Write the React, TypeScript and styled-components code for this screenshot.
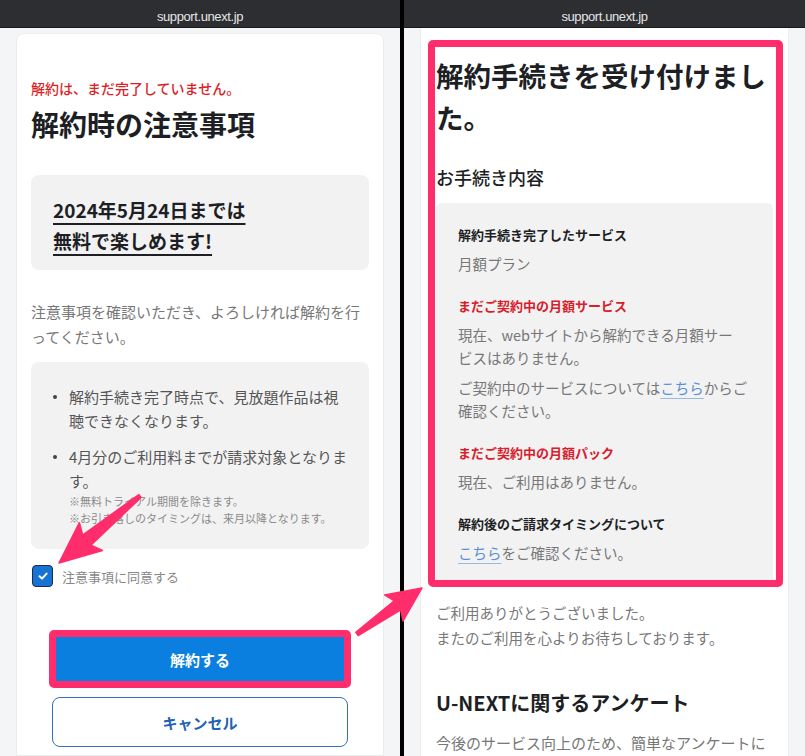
import React from "react";
import styled, { createGlobalStyle } from "styled-components";

const GlobalStyle = createGlobalStyle`
  html, body {
    margin: 0;
    padding: 0;
    background: #f4f5f7;
  }
  body {
    font-family: "Noto Sans CJK JP", "Noto Sans", sans-serif;
  }
  * {
    box-sizing: border-box;
  }
`;

const PINK = "#ff2d6b";

const Page = styled.div`
  position: relative;
  width: 805px;
  height: 756px;
  overflow: hidden;
  display: grid;
  grid-template-columns: 400px 4px 401px;
  background: #f4f5f7;
`;

const Divider = styled.div`
  background: #000;
`;

const Phone = styled.section`
  display: flex;
  flex-direction: column;
  min-width: 0;
  overflow: hidden;
  background: #f4f5f7;
`;

const UrlBar = styled.header`
  flex: none;
  height: 28px;
  padding-top: 5px;
  display: flex;
  align-items: center;
  justify-content: center;
  background: #2c2e32;
  border-bottom: 1px solid #18191b;
  color: #e6e6e6;
  font: 13px "Liberation Sans", Arial, sans-serif;
  letter-spacing: -0.4px;
`;

const Screen = styled.div<{ $top: number }>`
  flex: 1;
  display: flex;
  flex-direction: column;
  padding: ${(p) => p.$top}px 16px 0 16px;
`;

const Card = styled.div<{ $open?: boolean }>`
  flex: 1;
  background: #fff;
  border: 1px solid #eaecef;
  border-top: ${(p) => (p.$open ? "none" : "1px solid #eaecef")};
  border-radius: ${(p) => (p.$open ? "0" : "8px 8px 0 0")};
  padding: ${(p) => (p.$open ? "26px 15px 0" : "44px 14px 0")};
`;

/* ---------- left screen ---------- */

const Alert = styled.p`
  margin: 0;
  color: #dc1f26;
  font-size: 14px;
  line-height: 20px;
  font-weight: 500;
`;

const Title = styled.h1<{ $size?: number }>`
  margin: 6px 0 0;
  color: #1d1f24;
  font-size: ${(p) => p.$size ?? 28}px;
  line-height: ${(p) => (p.$size ? 42 : 40)}px;
  font-weight: 700;
`;

const PromoBox = styled.div`
  margin-top: 31px;
  padding: 19px 22px 14px;
  background: #f2f2f3;
  border-radius: 8px;
`;

const PromoText = styled.p`
  margin: 0;
  color: #1d1f24;
  font-size: 19px;
  line-height: 31px;
  font-weight: 700;

  span {
    text-decoration: underline;
    text-decoration-thickness: 1.5px;
    text-underline-offset: 5px;
  }
`;

const Lead = styled.p<{ $gap: number }>`
  margin: ${(p) => p.$gap}px 0 0;
  color: #777;
  font-size: 15px;
  line-height: 25px;
`;

const NoticeBox = styled.ul`
  margin: 13px 0 0;
  padding: 23px 18px 22px 22px;
  list-style: none;
  background: #f2f2f3;
  border-radius: 8px;
`;

const NoticeItem = styled.li`
  position: relative;
  padding-left: 16px;
  color: #555;
  font-size: 15px;
  line-height: 24px;

  & + & {
    margin-top: 12px;
  }

  &::before {
    content: "";
    position: absolute;
    left: 0;
    top: 10px;
    width: 4px;
    height: 4px;
    border-radius: 50%;
    background: #444;
  }
`;

const SubNote = styled.small`
  display: block;
  color: #8a8a8a;
  font-size: 11px;
  line-height: 17px;
`;

const Agree = styled.label`
  display: flex;
  align-items: center;
  gap: 9px;
  margin: 16px 0 0 1px;
  color: #888;
  font-size: 13px;
`;

const CheckBox = styled.span`
  display: flex;
  align-items: center;
  justify-content: center;
  width: 21px;
  height: 22px;
  border-radius: 4px;
  background: #1673d3;
  border: 1.5px solid #1b2c44;
`;

const Actions = styled.div`
  display: flex;
  flex-direction: column;
  gap: 12px;
  margin: 46px 21px 0;
`;

const Button = styled.button<{ $primary?: boolean; $marked?: boolean }>`
  position: relative;
  height: ${(p) => (p.$primary ? 52 : 50)}px;
  border-radius: ${(p) => (p.$primary ? 3 : 8)}px;
  border: ${(p) => (p.$primary ? "none" : "1.5px solid #3570bd")};
  background: ${(p) => (p.$primary ? "#0b7fdf" : "#fff")};
  color: ${(p) => (p.$primary ? "#fff" : "#2261b3")};
  font-family: inherit;
  font-size: 15px;
  font-weight: 700;

  &::after {
    content: "";
    display: ${(p) => (p.$marked ? "block" : "none")};
    position: absolute;
    inset: -3px;
    border: 7px solid ${PINK};
    border-radius: 5px;
  }
`;

/* ---------- right screen ---------- */

const Highlight = styled.div`
  position: relative;

  &::after {
    content: "";
    position: absolute;
    top: -14px;
    left: -8px;
    right: -10px;
    bottom: -4px;
    border: 7px solid ${PINK};
    border-radius: 5px;
    pointer-events: none;
  }
`;

const SectionTitle = styled.h2`
  margin: 26px 0 0;
  color: #1d1f24;
  font-size: 18px;
  line-height: 26px;
  font-weight: 500;
`;

const DetailBox = styled.div`
  margin-top: 13px;
  padding: 22px 22px 19px;
  background: #f2f2f3;
  border-radius: 6px 6px 0 0;
`;

const Entry = styled.div`
  & + & {
    margin-top: 21px;
  }
`;

const Label = styled.h3<{ $alert?: boolean }>`
  margin: 0;
  color: ${(p) => (p.$alert ? "#d7202b" : "#1d1f24")};
  font-size: 13px;
  line-height: 20px;
  font-weight: 700;
`;

const Value = styled.p`
  margin: 7px 0 0;
  color: #777;
  font-size: 14.5px;
  line-height: 23px;
`;

const TextLink = styled.a`
  color: #5b8fd4;
  text-decoration: underline;
  text-decoration-color: #9ab8e2;
  text-underline-offset: 4px;
`;

const Body = styled.p<{ $gap: number; $size?: number }>`
  margin: ${(p) => p.$gap}px 0 0;
  color: #777;
  font-size: ${(p) => p.$size ?? 14.5}px;
  line-height: 25px;
`;

const SurveyTitle = styled.h2`
  margin: 38px 0 0;
  color: #1d1f24;
  font-size: 20px;
  line-height: 30px;
  font-weight: 700;
`;

/* ---------- annotation arrows ---------- */

const Annotations = styled.svg`
  position: absolute;
  left: 0;
  top: 0;
  pointer-events: none;
`;

type Pt = [number, number];

const arrowPoints = (tail: Pt, tip: Pt, head: number, half: number, tailHalf: number, neckHalf: number) => {
  const dx = tip[0] - tail[0];
  const dy = tip[1] - tail[1];
  const len = Math.hypot(dx, dy);
  const ux = dx / len;
  const uy = dy / len;
  const px = -uy;
  const py = ux;
  const bx = tip[0] - ux * head;
  const by = tip[1] - uy * head;
  const wx = bx - ux * head * 0.15;
  const wy = by - uy * head * 0.15;
  const pts: Pt[] = [
    [tail[0] + px * tailHalf, tail[1] + py * tailHalf],
    [bx + px * neckHalf, by + py * neckHalf],
    [wx + px * half, wy + py * half],
    tip,
    [wx - px * half, wy - py * half],
    [bx - px * neckHalf, by - py * neckHalf],
    [tail[0] - px * tailHalf, tail[1] - py * tailHalf],
  ];
  return pts.map((p) => `${p[0].toFixed(1)},${p[1].toFixed(1)}`).join(" ");
};

const Check = () => (
  <svg width="12" height="12" viewBox="0 0 12 12">
    <path d="M2.5 6.3 L5 8.6 L9.6 3.6" fill="none" stroke="#fff" strokeWidth="2" strokeLinecap="round" strokeLinejoin="round" />
  </svg>
);

export default function App() {
  return (
    <>
      <GlobalStyle />
      <Page>
        <Phone>
          <UrlBar>support.unext.jp</UrlBar>
          <Screen $top={5}>
            <Card>
              <Alert>解約は、まだ完了していません。</Alert>
              <Title>解約時の注意事項</Title>
              <PromoBox>
                <PromoText>
                  <span>2024年5月24日までは</span>
                  <br />
                  <span>無料で楽しめます!</span>
                </PromoText>
              </PromoBox>
              <Lead $gap={29}>注意事項を確認いただき、よろしければ解約を行ってください。</Lead>
              <NoticeBox>
                <NoticeItem>解約手続き完了時点で、見放題作品は視聴できなくなります。</NoticeItem>
                <NoticeItem>
                  4月分のご利用料までが請求対象となります。
                  <SubNote>※無料トライアル期間を除きます。</SubNote>
                  <SubNote>※お引き落しのタイミングは、来月以降となります。</SubNote>
                </NoticeItem>
              </NoticeBox>
              <Agree>
                <CheckBox>
                  <Check />
                </CheckBox>
                注意事項に同意する
              </Agree>
              <Actions>
                <Button $primary $marked>解約する</Button>
                <Button>キャンセル</Button>
              </Actions>
            </Card>
          </Screen>
        </Phone>
        <Divider />
        <Phone>
          <UrlBar>support.unext.jp</UrlBar>
          <Screen $top={0}>
            <Card $open>
              <Highlight>
                <Title $size={27.5} style={{ marginTop: 0 }}>
                  解約手続きを受け付けました。
                </Title>
                <SectionTitle>お手続き内容</SectionTitle>
                <DetailBox>
                  <Entry>
                    <Label>解約手続き完了したサービス</Label>
                    <Value>月額プラン</Value>
                  </Entry>
                  <Entry>
                    <Label $alert>まだご契約中の月額サービス</Label>
                    <Value>
                      現在、webサイトから解約できる月額サー
                      <br />
                      ビスはありません。
                    </Value>
                    <Value>
                      ご契約中のサービスについては<TextLink>こちら</TextLink>からご
                      <br />
                      確認ください。
                    </Value>
                  </Entry>
                  <Entry>
                    <Label $alert>まだご契約中の月額パック</Label>
                    <Value>現在、ご利用はありません。</Value>
                  </Entry>
                  <Entry>
                    <Label>解約後のご請求タイミングについて</Label>
                    <Value>
                      <TextLink>こちら</TextLink>をご確認ください。
                    </Value>
                  </Entry>
                </DetailBox>
              </Highlight>
              <Body $gap={17}>
                ご利用ありがとうございました。
                <br />
                またのご利用を心よりお待ちしております。
              </Body>
              <SurveyTitle>U-NEXTに関するアンケート</SurveyTitle>
              <Body $gap={12} $size={15}>
                今後のサービス向上のため、簡単なアンケートにご協力ください。
              </Body>
            </Card>
          </Screen>
        </Phone>
        <Annotations width="805" height="756" viewBox="0 0 805 756">
          <polygon points={arrowPoints([140, 496], [59, 563], 36, 18, 1.8, 6.5)} fill={PINK} stroke={PINK} strokeWidth="1.5" strokeLinejoin="round" />
          <polygon points={arrowPoints([357, 634], [422, 588], 30, 16, 2, 5.5)} fill={PINK} stroke={PINK} strokeWidth="1.5" strokeLinejoin="round" />
        </Annotations>
      </Page>
    </>
  );
}
